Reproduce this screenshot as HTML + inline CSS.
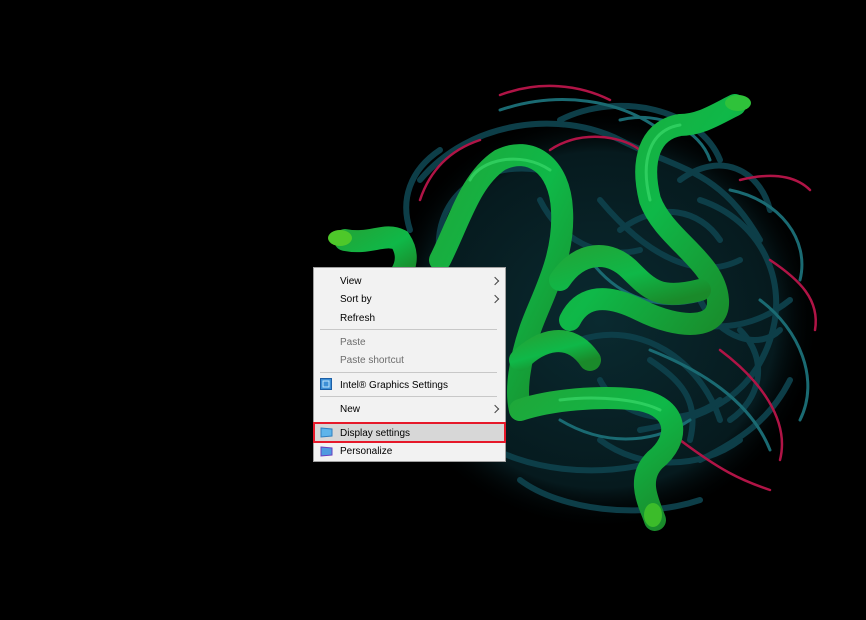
<!DOCTYPE html>
<html><head><meta charset="utf-8"><style>
body{margin:0;width:866px;height:620px;background:#000;overflow:hidden;position:relative;font-family:"Liberation Sans",Arial,sans-serif}
svg{position:absolute;left:0;top:0}
.menu{position:absolute;left:313px;top:267px;width:193px;height:195px;background:#f2f2f2;border:1px solid #a0a0a0;box-sizing:border-box;font-size:10px;color:#000}
.it{position:absolute;left:26px;height:18px;line-height:18px}
.dis{color:#6d6d6d}
.sep{position:absolute;left:6px;right:8px;height:1px;background:#c8c8c8}
.arr{position:absolute;right:7px;width:5px;height:5px;border-right:1px solid #444;border-top:1px solid #444;transform:rotate(45deg)}
.hl{position:absolute;top:154px;height:21px;background:#d7d7d7;border:2px solid #e6192a;box-sizing:border-box;left:-1px;width:193px}
</style></head><body>
<svg width="866" height="620" viewBox="0 0 866 620">
<defs>
<linearGradient id="g" x1="0" y1="0" x2="1" y2="1"><stop offset="0" stop-color="#1ea83a"/><stop offset=".5" stop-color="#0fb848"/><stop offset="1" stop-color="#1a8a2a"/></linearGradient>
<radialGradient id="bg" cx=".5" cy=".5" r=".5"><stop offset="0" stop-color="#0a2a30"/><stop offset=".8" stop-color="#061a1e"/><stop offset="1" stop-color="#000" stop-opacity="0"/></radialGradient>
</defs>
<ellipse cx="600" cy="320" rx="220" ry="210" fill="url(#bg)"/>
<g fill="none" stroke-linecap="round">
<g stroke="#0d3e48" stroke-width="6">
<path d="M420 180 C470 120 560 110 620 140 S720 170 760 240"/>
<path d="M440 260 C430 200 480 160 540 170"/>
<path d="M560 120 C620 90 700 110 720 160"/>
<path d="M700 200 C760 220 790 280 770 340 S700 420 640 430"/>
<path d="M480 440 C520 470 600 480 660 460"/>
<path d="M600 200 C650 260 700 280 740 260"/>
<path d="M580 340 C640 320 700 360 720 420"/>
<path d="M640 300 C680 330 740 340 790 300"/>
<path d="M520 480 C560 510 640 520 700 500"/>
<path d="M700 460 C740 440 770 420 790 380"/>
<path d="M600 380 C620 420 680 430 720 400"/>
<path d="M410 230 C400 200 410 170 440 150"/>
<path d="M620 230 C660 200 700 210 720 240"/>
<path d="M680 180 C720 150 760 170 770 210"/>
<path d="M740 330 C770 360 760 400 730 420"/>
<path d="M600 440 C640 470 700 470 740 440"/>
<path d="M540 200 C560 240 600 260 640 250"/>
<path d="M700 300 C720 340 760 350 780 330"/>
<path d="M650 360 C680 380 700 400 690 440"/>
</g>
<g stroke="#1a6a72" stroke-width="3">
<path d="M500 110 C560 90 620 100 660 130"/>
<path d="M730 190 C780 200 810 240 800 280"/>
<path d="M760 300 C800 330 820 380 800 420"/>
<path d="M650 350 C700 370 750 400 770 450"/>
<path d="M560 420 C610 450 660 440 690 420"/>
<path d="M590 260 C620 300 660 310 700 300"/>
<path d="M620 120 C660 110 700 130 710 160"/>
</g>
<g stroke="#b01446" stroke-width="2.5">
<path d="M500 95 C540 80 580 85 610 100"/>
<path d="M740 180 C780 170 800 180 810 190"/>
<path d="M770 260 C800 280 820 300 815 330"/>
<path d="M720 350 C760 380 790 420 780 460"/>
<path d="M680 440 C720 470 740 480 770 490"/>
<path d="M550 150 C580 130 620 135 640 150"/>
<path d="M420 200 C430 170 450 150 480 140"/>
</g>
<g stroke="url(#g)" stroke-width="22">
<path d="M735 105 C715 115 700 125 680 125 C650 130 640 160 650 200 C665 240 715 260 718 300 C720 330 680 330 640 310 C600 290 580 300 570 320"/>
<path d="M345 240 C370 245 385 232 400 240 C410 255 405 268 400 275"/>
<path d="M440 260 C460 220 470 180 500 160 C530 145 560 165 562 210 C565 260 540 300 530 330 C520 360 515 390 520 410"/>
<path d="M520 410 C550 400 600 395 640 400 C680 408 680 440 655 460 C635 480 650 505 655 520"/>
<path d="M560 280 C580 250 610 250 630 270 C650 290 660 300 700 290"/>
<path d="M520 360 C540 340 570 330 590 360"/>
</g>
<g stroke="#3fe070" stroke-width="3" opacity=".6">
<path d="M680 125 C650 130 640 160 650 200"/>
<path d="M470 180 C480 160 520 150 550 170"/>
<path d="M560 400 C600 395 640 400 660 410"/>
</g>
</g>
<ellipse cx="738" cy="103" rx="13" ry="8" fill="#2fc23a"/>
<ellipse cx="340" cy="238" rx="12" ry="8" fill="#4ec82a"/>
<ellipse cx="653" cy="515" rx="9" ry="12" fill="#3cbc2a"/>
</svg>
<div class="menu">
<div class="it" style="top:5px">View</div><div class="arr" style="top:10px"></div>
<div class="it" style="top:23px">Sort by</div><div class="arr" style="top:28px"></div>
<div class="it" style="top:42px">Refresh</div>
<div class="sep" style="top:61px"></div>
<div class="it dis" style="top:66px">Paste</div>
<div class="it dis" style="top:84px">Paste shortcut</div>
<div class="sep" style="top:104px"></div>
<svg style="left:6px;top:110px" width="12" height="12"><rect x=".5" y=".5" width="11" height="11" fill="#3d8fd6" stroke="#1d5fa6"/><path d="M3 3h6v6H3z" fill="none" stroke="#bfe6ff"/></svg>
<div class="it" style="top:109px">Intel® Graphics Settings</div>
<div class="sep" style="top:128px"></div>
<div class="it" style="top:133px">New</div><div class="arr" style="top:138px"></div>
<div class="hl"></div>
<svg style="left:6px;top:159px" width="13" height="11"><path d="M1 1 L12 2 L12 9 L1 10 Z" fill="#5eb4ea" stroke="#2f7fc0"/></svg>
<div class="it" style="top:157px">Display settings</div>
<svg style="left:6px;top:178px" width="13" height="11"><path d="M1 1 L12 2 L12 9 L1 10 Z" fill="#4f9be0" stroke="#6a3fc0"/></svg>
<div class="it" style="top:175px">Personalize</div>
</div>
</body></html>
